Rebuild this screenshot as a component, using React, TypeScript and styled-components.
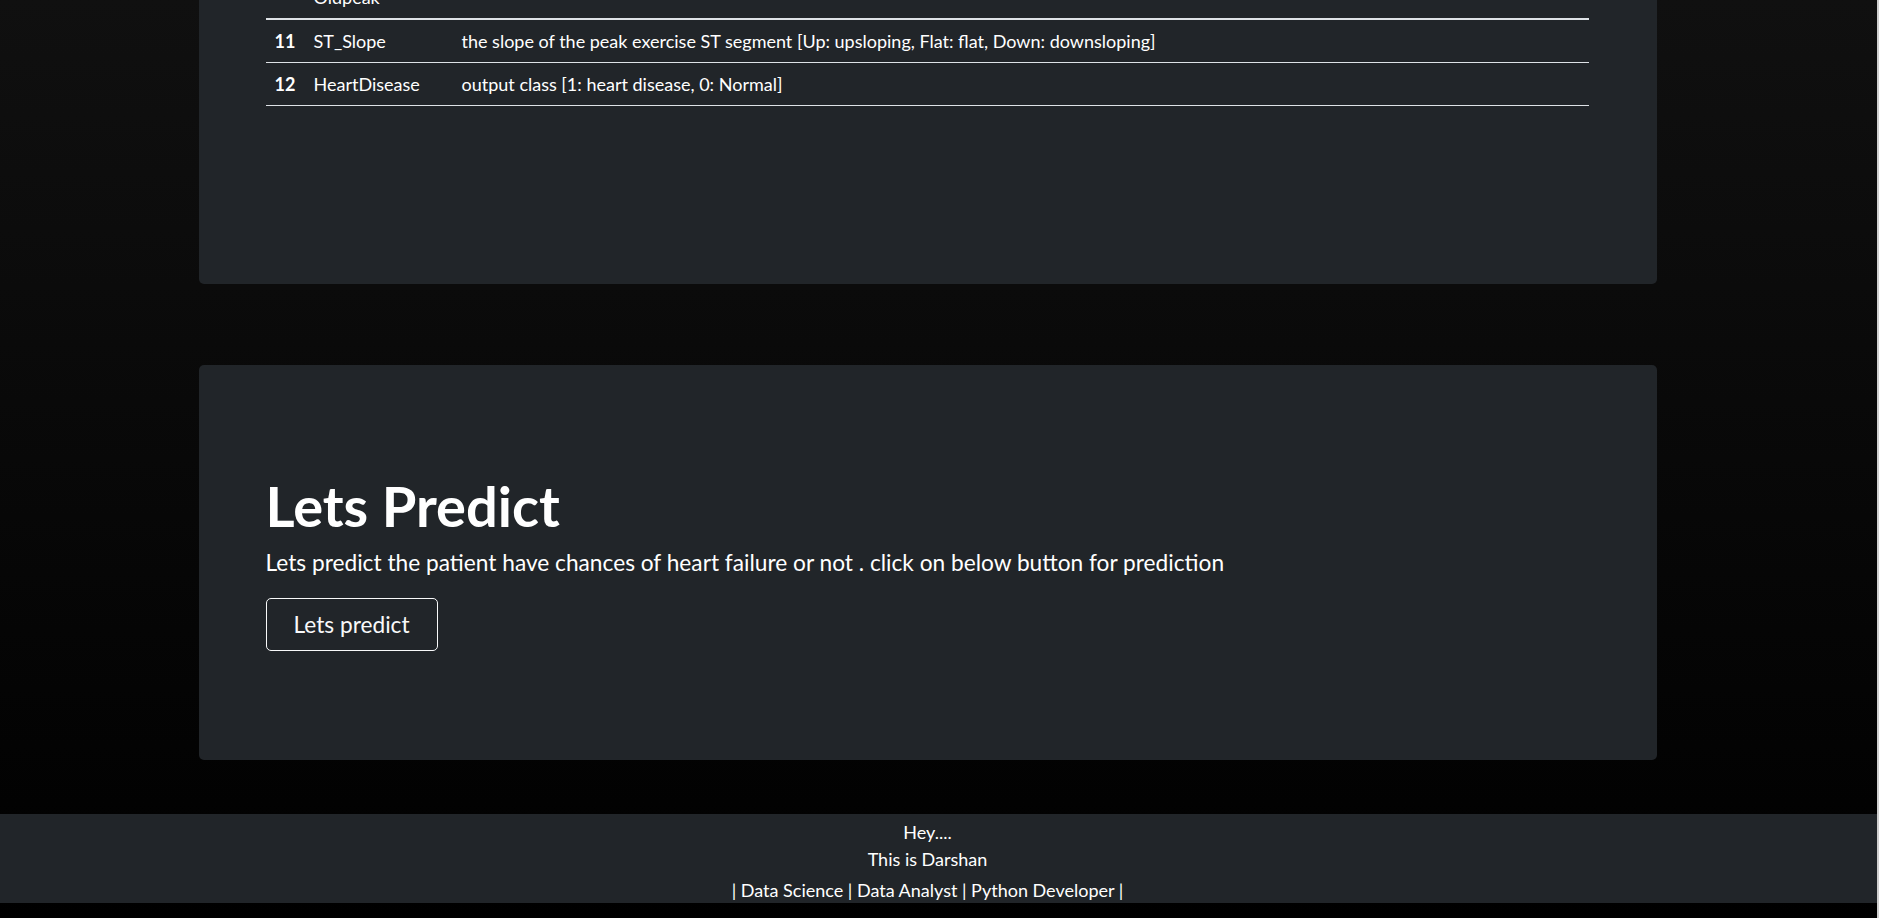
import React from "react";
import styled, { createGlobalStyle } from "styled-components";

const GlobalStyle = createGlobalStyle`
  html, body {
    margin: 0;
    padding: 0;
    background: #000;
  }
  body {
    font-family: Lato, "Open Sans", "Liberation Sans", sans-serif;
    color: #fff;
    overflow: hidden;
  }
  * {
    box-sizing: border-box;
  }
`;

const Page = styled.div`
  min-height: 918px;
  background: linear-gradient(to bottom, #101010 0%, #000 100%);
  border-right: 2px solid #cfcfcf;
  overflow: hidden;
`;

const Content = styled.div`
  padding-right: 22px;
`;

const Main = styled.main`
  width: 1458px;
  margin: 0 auto;
  display: flex;
  flex-direction: column;
  gap: 81px;
`;

interface CardProps {
  $pad: string;
  $offset?: number;
}

const Card = styled.section<CardProps>`
  background: #212529;
  border-radius: 5px;
  padding: ${(p) => p.$pad};
  margin-top: ${(p) => (p.$offset ? `${p.$offset}px` : "0")};
`;

const Table = styled.table`
  width: 100%;
  border-collapse: collapse;
  table-layout: fixed;
  font-size: 18px;
  line-height: 26px;
  color: #fff;
`;

const Row = styled.tr<{ $thick?: boolean }>`
  border-bottom: ${(p) => (p.$thick ? "2px" : "1px")} solid #dee2e6;
`;

const NumCell = styled.th`
  width: 39px;
  padding: 8px 0 8px 9px;
  text-align: left;
  font-weight: 700;
  vertical-align: top;
`;

const NameCell = styled.td`
  width: 148px;
  padding: 8px 9px;
  vertical-align: top;
`;

const DescCell = styled.td`
  padding: 8px 9px;
  vertical-align: top;
`;

const Title = styled.h1`
  margin: 0 0 7px;
  font-size: 56px;
  line-height: 1.2;
  font-weight: 700;
  color: #fff;
`;

const Lead = styled.p`
  margin: 0 0 19px;
  font-size: 22.7px;
  line-height: 33px;
  font-weight: 400;
`;

const OutlineButton = styled.button`
  display: inline-block;
  height: 53px;
  padding: 9px 27px;
  font-family: inherit;
  font-size: 22.7px;
  line-height: 33px;
  color: #f8f9fa;
  background: transparent;
  border: 1px solid #f8f9fa;
  border-radius: 5px;
  cursor: pointer;
`;

const Footer = styled.footer`
  margin-top: 54px;
  background: #212529;
  padding: 5px 22px 0 0;
  display: flex;
  flex-direction: column;
  align-items: center;
  font-size: 18px;
  line-height: 26.4px;
`;

const FooterLine = styled.div<{ $gap?: number }>`
  margin-top: ${(p) => p.$gap ?? 0}px;
`;

const features = [
  { no: 11, name: "ST_Slope", desc: "the slope of the peak exercise ST segment [Up: upsloping, Flat: flat, Down: downsloping]" },
  { no: 12, name: "HeartDisease", desc: "output class [1: heart disease, 0: Normal]" },
];

export default function App() {
  return (
    <>
      <GlobalStyle />
      <Page>
        <Content>
          <Main>
            <Card $pad="53px 68px 178px 67px" $offset={-77}>
              <Table>
                <tbody>
                  <Row $thick>
                    <NumCell></NumCell>
                    <NameCell>Oldpeak</NameCell>
                    <DescCell></DescCell>
                  </Row>
                  {features.map((f) => (
                    <Row key={f.no}>
                      <NumCell>{f.no}</NumCell>
                      <NameCell>{f.name}</NameCell>
                      <DescCell>{f.desc}</DescCell>
                    </Row>
                  ))}
                </tbody>
              </Table>
            </Card>
            <Card $pad="107px 67px 109px 67px">
              <Title>Lets Predict</Title>
              <Lead>Lets predict the patient have chances of heart failure or not . click on below button for prediction</Lead>
              <OutlineButton type="button">Lets predict</OutlineButton>
            </Card>
          </Main>
        </Content>
        <Footer>
          <FooterLine>Hey....</FooterLine>
          <FooterLine>This is Darshan</FooterLine>
          <FooterLine $gap={5}>| Data Science | Data Analyst | Python Developer |</FooterLine>
        </Footer>
      </Page>
    </>
  );
}
